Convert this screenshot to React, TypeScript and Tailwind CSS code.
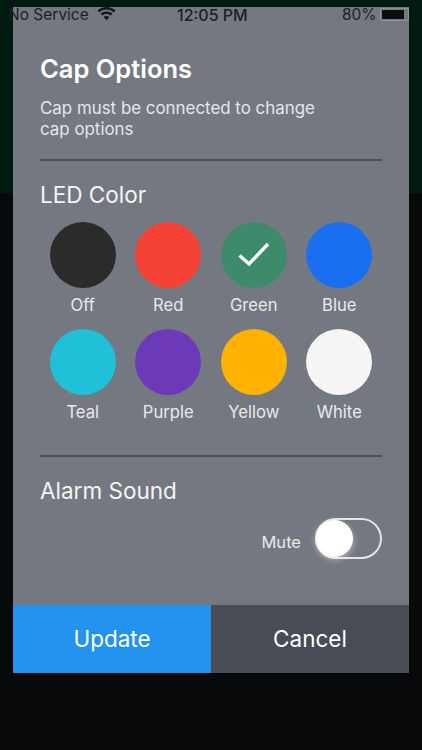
import React from "react";

const COLORS = [
  { name: "Off", bg: "bg-[#2b2b2b]" },
  { name: "Red", bg: "bg-[#f44336]" },
  { name: "Green", bg: "bg-[#3d8b6b]", checked: true },
  { name: "Blue", bg: "bg-[#1a6ff0]" },
  { name: "Teal", bg: "bg-[#1fc0d8]" },
  { name: "Purple", bg: "bg-[#6c3ab8]" },
  { name: "Yellow", bg: "bg-[#ffb300]" },
  { name: "White", bg: "bg-[#f5f5f5]" },
];

const App: React.FC = () => {
  return (
    <div className="relative w-[422px] h-[750px] overflow-hidden bg-[#08090b] font-['Inter',sans-serif]">
      {/* page behind the modal */}
      <div className="h-[193px] bg-[#001a10]" />

      {/* status bar */}
      <div className="absolute z-10 left-0 top-0 w-full h-[28px] text-[#1d2025] text-[15.5px]">
        <span className="absolute left-[8px] top-[5px] leading-[20px]">No Service</span>
        <svg className="absolute left-[97px] top-[7px]" width="19" height="14" viewBox="0 0 19 14" fill="#15181c">
          <path d="M9.5 0C6 0 2.9 1.3.5 3.6l1.7 1.8C4.1 3.6 6.7 2.5 9.5 2.5s5.4 1.1 7.3 2.9l1.7-1.8C16.1 1.3 13 0 9.5 0z" />
          <path d="M9.5 4.5c-2.3 0-4.4.9-5.9 2.3l1.7 1.8c1.1-1 2.6-1.7 4.2-1.7s3.1.7 4.2 1.7l1.7-1.8C13.9 5.4 11.8 4.5 9.5 4.5z" />
          <path d="M9.5 9c-1.1 0-2.1.4-2.9 1.1l2.9 3.1 2.9-3.1C11.6 9.4 10.6 9 9.5 9z" />
        </svg>
        <span className="absolute left-[177px] top-[5px] leading-[20px] text-[16px] font-medium">12:05 PM</span>
        <span className="absolute left-[342px] top-[5px] leading-[20px]">80%</span>
        <div className="absolute left-[380px] top-[8px] w-[29px] h-[13px] rounded-[2px] border border-[#8f949a] p-[1px]">
          <div className="h-full w-[22px] bg-[#0c0e10]" />
        </div>
      </div>

      {/* modal */}
      <div className="absolute left-[13px] top-[7px] w-[396px] h-[666px] flex flex-col bg-[#747981]">
        <div className="flex-1 px-[27px] pt-[46px]">
          <h1 className="text-[25.5px] leading-[32px] font-semibold text-white">Cap Options</h1>
          <p className="mt-[13px] text-[16.9px] leading-[21px] text-[#e4e6e8]">
            Cap must be connected to change
            <br />
            cap options
          </p>
          <div className="mt-[19px] h-[2px] bg-[#494e57]" />

          <h2 className="mt-[19px] text-[22.5px] leading-[30px] text-[#f4f4f5]">LED Color</h2>
          <div className="mt-[12px] grid grid-cols-4 gap-y-[13px] w-[342px]">
            {COLORS.map((c) => (
              <div key={c.name} className="flex flex-col items-center">
                <div className={`w-[66px] h-[66px] rounded-full flex items-center justify-center ${c.bg}`}>
                  {c.checked && (
                    <svg width="34" height="28" viewBox="0 0 34 28" fill="none" stroke="#fff" strokeWidth="3.4">
                      <path d="M2.5 14.5l9.5 8.5L31 3" />
                    </svg>
                  )}
                </div>
                <span className="mt-[7px] text-[16.6px] leading-[21px] text-[#e8e9eb]">{c.name}</span>
              </div>
            ))}
          </div>
          <div className="mt-[32px] h-[2px] bg-[#494e57]" />

          <h2 className="mt-[19px] text-[22.5px] leading-[30px] text-[#f4f4f5]">Alarm Sound</h2>
          <div className="mt-[12px] flex items-center justify-end">
            <span className="text-[16.5px] text-[#e8e9eb] mr-[14px] mt-[7px]">Mute</span>
            <div className="relative w-[67px] h-[41px] rounded-full border-[2px] border-[#e4e5e7]">
              <div className="absolute left-[-1px] top-[0px] w-[37px] h-[37px] rounded-full bg-white shadow-[0_2px_6px_rgba(255,255,255,0.5)]" />
            </div>
          </div>
        </div>
        <div className="flex h-[68px]">
          <button className="w-[198px] bg-[#2492ef] text-[22.5px] text-white">Update</button>
          <button className="flex-1 bg-[#474c55] text-[22.5px] text-white">Cancel</button>
        </div>
      </div>
    </div>
  );
};

export default App;
